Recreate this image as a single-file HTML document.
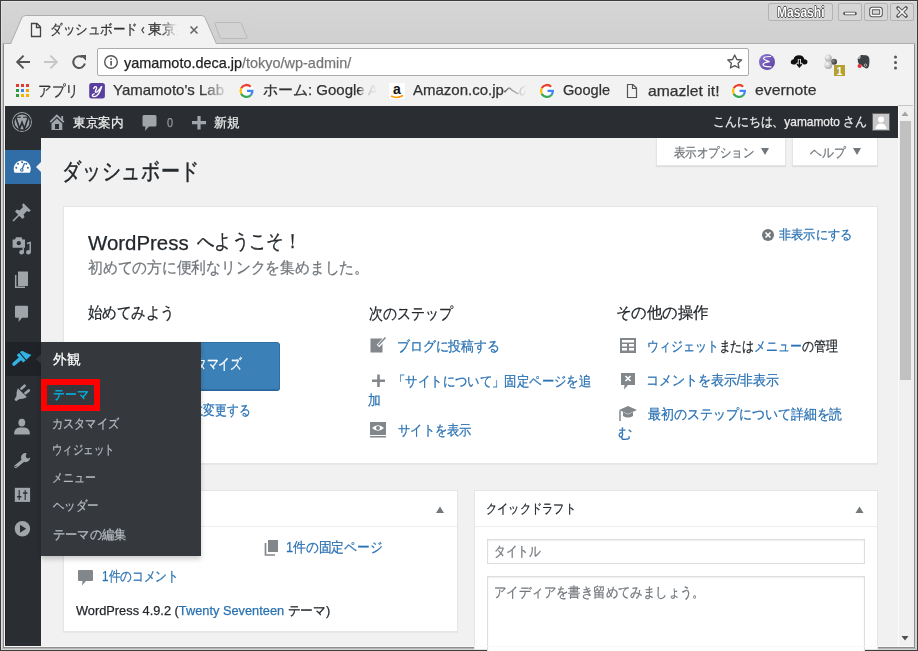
<!DOCTYPE html>
<html lang="ja">
<head>
<meta charset="utf-8">
<style>
*{box-sizing:border-box}
html,body{margin:0;padding:0;width:918px;height:651px;overflow:hidden;background:#3c3c3c}
body{font-family:"Liberation Sans",sans-serif;position:relative}
.a{position:absolute}
.t{position:absolute;white-space:nowrap;line-height:1;transform-origin:0 0;-webkit-text-stroke:.25px currentColor}
svg{position:absolute;overflow:visible}
</style>
</head>
<body>
<!-- window frame light edges -->
<div class="a" style="left:1px;top:1px;width:916px;height:649px;background:#d4d4d4"></div>
<div class="a" style="left:1px;top:1px;width:916px;height:1px;background:#e3e3e3"></div>
<div class="a" style="left:1px;top:1px;width:1px;height:649px;background:#e0e0e0"></div>
<!-- tab strip -->
<div class="a" style="left:2px;top:2px;width:913px;height:41px;background:linear-gradient(#d5d5d5,#d0d0d0)"></div>
<div class="a" style="left:2px;top:43px;width:913px;height:1px;background:#b0b0b0"></div>
<!-- content border -->
<div class="a" style="left:3px;top:44px;width:912px;height:604px;background:#8e8e8e"></div>
<div class="a" style="left:2px;top:44px;width:1px;height:605px;background:#c8c8c8"></div>
<div class="a" style="left:2px;top:648px;width:914px;height:1px;background:#b5b5b5"></div>
<!-- toolbar + bookmarks -->
<div class="a" style="left:4px;top:44px;width:910px;height:62px;background:#f2f2f2"></div>
<div class="a" style="left:4px;top:106px;width:910px;height:541px;background:#f4f4f4"></div>
<!-- TAB -->
<svg width="918" height="60" style="left:0;top:0">
  <path d="M10.5 44 L21.8 17.8 Q23 15.5 25.5 15.5 L201.5 15.5 Q204 15.5 205.2 17.8 L216.5 44" fill="#f2f2f2" stroke="#adadad" stroke-width="1"/>
  <rect x="4" y="44" width="910" height="10" fill="#f2f2f2"/>
  <path d="M215.5 22.5 L240 22.5 Q241 22.5 241.5 23.5 L247 37.5 Q247.3 38.5 246 38.5 L221.5 38.5 Q220.5 38.5 220 37.5 L214.8 23.5 Q214.5 22.5 215.5 22.5 Z" fill="#d3d3d3" stroke="#bababa" stroke-width="1"/>
  <!-- file icon -->
  <path d="M31.5 23.5 L37 23.5 L40.5 27 L40.5 36.5 L31.5 36.5 Z M36.5 23.5 L36.5 27.5 L40.5 27.5" fill="none" stroke="#444" stroke-width="1.3"/>
  <!-- close x -->
  <path d="M190.5 26.5 L197.5 33.5 M197.5 26.5 L190.5 33.5" stroke="#666" stroke-width="1.6"/>
  <!-- profile / window buttons -->
  <rect x="768.5" y="3.5" width="64" height="17" rx="1.5" fill="#d6d6d6" stroke="#b3b3b3"/>
  <rect x="838.5" y="3.5" width="23" height="17" rx="1.5" fill="#d6d6d6" stroke="#b3b3b3"/>
  <rect x="864.5" y="3.5" width="23" height="17" rx="1.5" fill="#d6d6d6" stroke="#b3b3b3"/>
  <rect x="890.5" y="3.5" width="23" height="17" rx="1.5" fill="#d6d6d6" stroke="#b3b3b3"/>
  <path d="M845 13.5 L855 13.5" stroke="#555" stroke-width="3.6" stroke-linecap="round"/>
  <path d="M845 13.5 L855 13.5" stroke="#fff" stroke-width="1.8"/>
  <rect x="871" y="8.5" width="10" height="7" rx="1.5" fill="none" stroke="#555" stroke-width="3.6"/>
  <rect x="871" y="8.5" width="10" height="7" rx="1.5" fill="none" stroke="#fff" stroke-width="1.6"/>
  <path d="M898 8 L906 16 M906 8 L898 16" stroke="#555" stroke-width="3.6" stroke-linecap="round"/>
  <path d="M898 8 L906 16 M906 8 L898 16" stroke="#fff" stroke-width="1.7"/>
</svg>
<div class="t" style="left:49.6px;top:22.0px;font-size:14px;color:#333;transform:scaleX(0.895)">ダッシュボード</div>
<div class="t" style="left:140.7px;top:21.5px;font-size:14px;color:#333;transform:scaleX(0.775)">‹</div>
<div class="t" style="left:148px;top:22px;font-size:14px;color:#333;width:34px;padding-bottom:4px;overflow:hidden;-webkit-mask-image:linear-gradient(90deg,#000 12px,transparent 30px);transform:scaleX(1)">東京案内</div>
<div class="t" style="left:777px;top:4.5px;font-size:14px;font-weight:bold;color:#fff;-webkit-text-stroke:0;text-shadow:.8px 0 0 #4a4a4a,-.8px 0 0 #4a4a4a,0 .8px 0 #4a4a4a,0 -.8px 0 #4a4a4a;transform:scaleX(0.86)">Masashi</div>

<!-- OMNIBOX -->
<div class="a" style="left:97px;top:48px;width:652px;height:28px;background:#fff;border:1px solid #ababab;border-radius:2px"></div>
<svg width="918" height="110" style="left:0;top:0">
  <!-- back -->
  <path d="M30 62 L17.5 62 M23.6 55.6 L17.2 62 L23.6 68.4" fill="none" stroke="#555" stroke-width="2"/>
  <path d="M44 62 L56.5 62 M50.4 55.6 L56.8 62 L50.4 68.4" fill="none" stroke="#c6c6c6" stroke-width="2"/>
  <!-- reload -->
  <path d="M84.9 63.6 A5.9 5.9 0 1 1 82.6 57.3" fill="none" stroke="#555" stroke-width="2"/>
  <path d="M80.2 55 L86 55 L86 60.8 Z" fill="#555"/>
  <!-- info -->
  <circle cx="111" cy="62" r="6.3" fill="none" stroke="#555" stroke-width="1.4"/>
  <rect x="110.3" y="61" width="1.6" height="4.5" fill="#555"/>
  <rect x="110.3" y="58.3" width="1.6" height="1.6" fill="#555"/>
  <!-- star -->
  <path d="M734.7 55 L736.8 59.5 L741.6 60 L738 63.2 L739 68 L734.7 65.6 L730.4 68 L731.4 63.2 L727.8 60 L732.6 59.5 Z" fill="none" stroke="#555" stroke-width="1.3" stroke-linejoin="round"/>
  <!-- emacs -->
  <defs>
    <linearGradient id="emg" x1="0" y1="0" x2="1" y2="1"><stop offset="0" stop-color="#8c74d0"/><stop offset="1" stop-color="#5a3f9e"/></linearGradient>
    <radialGradient id="b1" cx=".35" cy=".35" r=".7"><stop offset="0" stop-color="#fafafa"/><stop offset="1" stop-color="#a8a8a8"/></radialGradient>
    <radialGradient id="b2" cx=".35" cy=".35" r=".7"><stop offset="0" stop-color="#888"/><stop offset="1" stop-color="#333"/></radialGradient>
  </defs>
  <circle cx="767" cy="62" r="8" fill="url(#emg)"/>
  <path d="M771 56.5 Q763.5 56.5 763.5 58.3 Q763.5 60 769.5 61.6 Q763 62.5 763 64.6 Q763.3 67 771.5 66.8" fill="none" stroke="#fff" stroke-width="1.2"/>
  <!-- cloud -->
  <path d="M793.5 64.5 Q790.5 64.5 790.8 61.8 Q791 59.5 793.6 59.3 Q794.3 55.3 799 55.3 Q803.5 55.5 804.3 59.3 Q807.5 59.5 807.5 62 Q807.3 64.5 804.5 64.5 Z" fill="#111"/>
  <path d="M799.4 59 L799.4 66 M796.3 63.5 L799.4 67 L802.5 63.5" fill="none" stroke="#f2f2f2" stroke-width="3.2"/>
  <path d="M799.4 59.5 L799.4 66 M797 64 L799.4 66.8 L801.8 64" fill="none" stroke="#111" stroke-width="1.5"/>
  <!-- balls -->
  <circle cx="834" cy="61.8" r="3" fill="url(#b2)"/>
  <circle cx="828.3" cy="65" r="3.9" fill="url(#b1)"/>
  <circle cx="828.3" cy="57.9" r="3.5" fill="url(#b1)"/>
  <rect x="834" y="65" width="11" height="11" fill="#b5a032"/>
  <text x="839.5" y="74.5" font-size="10" fill="#fff" text-anchor="middle" font-family="Liberation Sans" font-weight="bold">1</text>
  <!-- evernote -->
  <path d="M859.5 56.5 L861 55 L866 55.2 Q869.5 56 869.4 60 Q869.5 66 868 68 Q866 69 864.5 67.5 Q862.5 67 861.5 65 L859 64 Q857.5 62 857.6 58.6 Z" fill="#3d4144"/>
  <path d="M857.6 58.2 L860 58.2 L860 56" fill="none" stroke="#f2f2f2" stroke-width=".8"/>
  <circle cx="865.5" cy="65.2" r="1.2" fill="none" stroke="#f2f2f2" stroke-width=".6"/>
  <circle cx="859.6" cy="66" r="2.1" fill="#e8303c"/>
  <!-- dots -->
  <circle cx="895.5" cy="57" r="1.5" fill="#555"/>
  <circle cx="895.5" cy="62.5" r="1.5" fill="#555"/>
  <circle cx="895.5" cy="68" r="1.5" fill="#555"/>
  <!-- bookmarks -->
  <g fill="#e33b2e"><rect x="16" y="84" width="3" height="3"/><rect x="21" y="84" width="3" height="3"/><rect x="26" y="84" width="3" height="3"/></g>
  <g><rect x="16" y="89" width="3" height="3" fill="#2e9a44"/><rect x="21" y="89" width="3" height="3" fill="#4285f4"/><rect x="26" y="89" width="3" height="3" fill="#f4a400"/></g>
  <g><rect x="16" y="94" width="3" height="3" fill="#2e9a44"/><rect x="21" y="94" width="3" height="3" fill="#f4b400"/><rect x="26" y="94" width="3" height="3" fill="#f4b400"/></g>
  <rect x="89.2" y="83" width="15.7" height="15.6" rx="2.5" fill="#5a3fa0"/>
  <path d="M93.6 88.6 Q94.8 86 96.3 86.9 Q97.2 87.8 95.6 90.6 Q94.6 92.6 96.6 92.2 Q98.6 91.2 101.8 86.2 Q99.5 93.5 96.8 95.6 Q94 97.3 92.5 96 Q91.8 94.6 94.2 93.8" fill="none" stroke="#fff" stroke-width="1.3" stroke-linecap="round"/>
</svg>
<div class="t" style="left:123.8px;top:54.7px;font-size:15px;color:#222;transform:scaleX(0.963)">yamamoto.deca.jp<span style="color:#777">/tokyo/wp-admin/</span></div>
<div class="t" style="left:38.1px;top:82.5px;font-size:15px;color:#333;transform:scaleX(0.903)">アプリ</div>
<div class="t" style="left:113px;top:82px;font-size:15px;color:#333;width:112px;padding-bottom:4px;overflow:hidden;-webkit-mask-image:linear-gradient(90deg,#000 88px,rgba(0,0,0,.15) 112px);transform:scaleX(1)">Yamamoto's Lab</div>
<div class="t" style="left:263px;top:82px;font-size:15px;color:#333;width:114px;padding-bottom:4px;overflow:hidden;-webkit-mask-image:linear-gradient(90deg,#000 96px,rgba(0,0,0,.35) 100px,transparent 114px);transform:scaleX(1)">ホーム: Google Ad</div>
<div class="t" style="left:413px;top:82px;font-size:15px;color:#333;width:114px;padding-bottom:4px;overflow:hidden;-webkit-mask-image:linear-gradient(90deg,#000 89px,rgba(0,0,0,.55) 97px,transparent 114px);transform:scaleX(1)">Amazon.co.jpへの</div>
<div class="t" style="left:563.4px;top:81.5px;font-size:15px;color:#333;transform:scaleX(0.973)">Google</div>
<div class="t" style="left:647.9px;top:82.5px;font-size:15px;color:#333;transform:scaleX(1.046)">amazlet it!</div>
<div class="t" style="left:754.9px;top:82.0px;font-size:15px;color:#333;transform:scaleX(1.053)">evernote</div>


<!-- bookmark icons -->
<svg width="918" height="110" style="left:0;top:0">
  <g transform="translate(246.5,91)"><circle r="7.5" fill="#fff"/>
    <path d="M4.2 -4.3 A6 6 0 0 0 -5.3 -2.8" fill="none" stroke="#ea4335" stroke-width="2.3"/>
    <path d="M-5.3 -2.8 A6 6 0 0 0 -5.3 2.8" fill="none" stroke="#fbbc05" stroke-width="2.3"/>
    <path d="M-5.3 2.8 A6 6 0 0 0 4.5 3.9" fill="none" stroke="#34a853" stroke-width="2.3"/>
    <path d="M4.5 3.9 A6 6 0 0 0 5.9 -0.2 L0.5 -0.2" fill="none" stroke="#4285f4" stroke-width="2.3"/></g>
  <g transform="translate(547,91)"><circle r="7.5" fill="#fff"/>
    <path d="M4.2 -4.3 A6 6 0 0 0 -5.3 -2.8" fill="none" stroke="#ea4335" stroke-width="2.3"/>
    <path d="M-5.3 -2.8 A6 6 0 0 0 -5.3 2.8" fill="none" stroke="#fbbc05" stroke-width="2.3"/>
    <path d="M-5.3 2.8 A6 6 0 0 0 4.5 3.9" fill="none" stroke="#34a853" stroke-width="2.3"/>
    <path d="M4.5 3.9 A6 6 0 0 0 5.9 -0.2 L0.5 -0.2" fill="none" stroke="#4285f4" stroke-width="2.3"/></g>
  <g transform="translate(739,91)"><circle r="7.5" fill="#fff"/>
    <path d="M4.2 -4.3 A6 6 0 0 0 -5.3 -2.8" fill="none" stroke="#ea4335" stroke-width="2.3"/>
    <path d="M-5.3 -2.8 A6 6 0 0 0 -5.3 2.8" fill="none" stroke="#fbbc05" stroke-width="2.3"/>
    <path d="M-5.3 2.8 A6 6 0 0 0 4.5 3.9" fill="none" stroke="#34a853" stroke-width="2.3"/>
    <path d="M4.5 3.9 A6 6 0 0 0 5.9 -0.2 L0.5 -0.2" fill="none" stroke="#4285f4" stroke-width="2.3"/></g>
  <rect x="389" y="83" width="16" height="16" fill="#fff"/>
  <text x="397" y="93.5" font-size="14" fill="#111" text-anchor="middle" font-family="Liberation Sans" font-weight="bold">a</text>
  <path d="M391 96 Q397 99 403 95.5" fill="none" stroke="#f90" stroke-width="1.5"/>
  <path d="M627.5 84.5 L633 84.5 L636.5 88 L636.5 97.5 L627.5 97.5 Z M632.5 84.5 L632.5 88.5 L636.5 88.5" fill="none" stroke="#555" stroke-width="1.2"/>
</svg>

<!-- WP ADMIN BAR -->
<div class="a" style="left:5px;top:106px;width:893px;height:32px;background:#2a2d32"></div>
<!-- scrollbar -->
<div class="a" style="left:898px;top:106px;width:16px;height:540px;background:#f0f0f0;border-left:1px solid #fbfbfb"></div>
<div class="a" style="left:900px;top:121px;width:10.5px;height:259px;background:#c1c1c1"></div>
<div class="a" style="left:898px;top:105px;width:15px;height:1px;background:#c6c6c6"></div>
<!-- content bg -->
<div class="a" style="left:41px;top:138px;width:857px;height:508px;background:#f1f1f1"></div>
<!-- sidebar -->
<div class="a" style="left:5px;top:138px;width:36px;height:508px;background:#2a2d32;border-left:1px solid #202428"></div>
<div class="a" style="left:5px;top:150px;width:36px;height:34px;background:#316ea7"></div>
<div class="a" style="left:5px;top:342px;width:36px;height:34px;background:#1f2328"></div>


<!-- ADMIN BAR CONTENT -->
<svg width="918" height="651" style="left:0;top:0">
  <!-- WP logo -->
  <circle cx="22" cy="122" r="9.4" fill="none" stroke="#a0a5aa" stroke-width="1.1"/>
  <circle cx="22" cy="122" r="7.6" fill="#a0a5aa"/>
  <path d="M15.8 117.6 L19.6 128.8 L22 122.5 L24.4 128.8 L28.2 117.6" fill="none" stroke="#2a2d32" stroke-width="1.7" stroke-linejoin="miter"/>
  <path d="M15 117.3 L21 117.3 M23 117.3 L29 117.3" stroke="#2a2d32" stroke-width="1.1"/>
  <circle cx="22" cy="122" r="8.4" fill="none" stroke="#2a2d32" stroke-width="1"/>
  <!-- home -->
  <path d="M50.2 122.2 L56.8 115.6 L63.8 122.2" fill="none" stroke="#a0a5aa" stroke-width="1.8"/>
  <path d="M62.2 116 L62.2 120" stroke="#a0a5aa" stroke-width="1.8"/>
  <path d="M51.5 123.5 L56.8 118.4 L62.3 123.5 L62.3 130 L51.5 130 Z" fill="#a0a5aa"/>
  <rect x="55" y="124" width="4" height="5" fill="#2a2d32"/>
  <!-- comment -->
  <path d="M144 115 L155 115 Q156.5 115 156.5 116.5 L156.5 125 Q156.5 126.5 155 126.5 L149 126.5 L145 131 L145.5 126.5 L144 126.5 Q142.5 126.5 142.5 125 L142.5 116.5 Q142.5 115 144 115 Z" fill="#a0a5aa"/>
  <!-- plus -->
  <path d="M192 122.7 L206 122.7 M199 116 L199 129.5" stroke="#a0a5aa" stroke-width="3.2"/>
  <!-- avatar -->
  <rect x="872" y="113" width="18" height="18" fill="#fff" opacity=".25"/>
  <rect x="873" y="114" width="16" height="16" fill="#c7c7c7"/>
  <circle cx="881" cy="119.5" r="3" fill="#fff"/>
  <path d="M875.5 129 Q876 123.5 881 123.5 Q886 123.5 886.5 129 Z" fill="#fff"/>
</svg>
<div class="t" style="left:73.3px;top:115.5px;font-size:13px;color:#eee;transform:scaleX(0.974)">東京案内</div>
<div class="t" style="left:166.6px;top:116.0px;font-size:13px;color:#999;transform:scaleX(0.838)">0</div>
<div class="t" style="left:214.3px;top:115.5px;font-size:13px;color:#eee;transform:scaleX(0.984)">新規</div>
<div class="t" style="left:713.2px;top:114.5px;font-size:13px;color:#eee;transform:scaleX(0.915)">こんにちは、yamamoto さん</div>

<!-- SIDEBAR ICONS -->
<svg width="918" height="651" style="left:0;top:0">
  <!-- dashboard gauge -->
  <path d="M14.6 172.7 A8.5 8.5 0 1 1 29.8 172.7 Z" fill="#fff"/>
  <path d="M24.6 163 L21.8 170" stroke="#316ea7" stroke-width="1.3"/>
  <circle cx="21.8" cy="170" r="1.8" fill="#316ea7"/>
  <circle cx="21.8" cy="170" r=".7" fill="#fff"/>
  <circle cx="18" cy="163.8" r="1" fill="#316ea7"/><circle cx="22.1" cy="162.2" r="1" fill="#316ea7"/><circle cx="26.3" cy="163.8" r="1" fill="#316ea7"/>
  <circle cx="16.3" cy="167.8" r="1" fill="#316ea7"/><circle cx="27.9" cy="167.8" r="1" fill="#316ea7"/>
  <path d="M36 167 L41 162 L41 172 Z" fill="#f1f1f1"/>
  <!-- pin -->
  <g transform="translate(22,212)">
    <path d="M1.5 -8.8 L8.8 -1.5 L7 0 L5 -1 L1.5 2.5 L2.5 5 L0.5 7 L-7 -0.5 L-5 -2.5 L-2.5 -1.5 L1 -5 L0 -7 Z" fill="#a0a5aa"/>
    <path d="M-2.5 2.5 L-9 9" stroke="#a0a5aa" stroke-width="1.6"/>
  </g>
  <!-- media -->
  <path d="M12.6 239.5 L15 239.5 L16 237.2 L21.5 237.2 L22.5 239.5 L25 239.5 L25 247.7 L12.6 247.7 Z" fill="#a0a5aa"/>
  <circle cx="18.8" cy="243.2" r="2.1" fill="#2a2d32"/>
  <path d="M27 243.5 L30.2 242.6 L30.2 252.5" fill="none" stroke="#a0a5aa" stroke-width="1.5"/>
  <circle cx="28.4" cy="252.3" r="2.3" fill="#a0a5aa"/><circle cx="21.6" cy="252.3" r="2.3" fill="#a0a5aa"/>
  <path d="M23.2 252.3 L23.2 247.5" stroke="#a0a5aa" stroke-width="1.4"/>
  <!-- pages -->
  <rect x="18" y="271.5" width="10" height="14.5" fill="#a0a5aa"/>
  <path d="M15.7 275 L15.7 287.3 L25 287.3" fill="none" stroke="#a0a5aa" stroke-width="1.5"/>
  <!-- comments -->
  <path d="M16 305.7 L27 305.7 Q28 305.7 28 306.7 L28 316.7 Q28 317.7 27 317.7 L22 317.7 L18.5 322 L18.8 317.7 L16 317.7 Q15 317.7 15 316.7 L15 306.7 Q15 305.7 16 305.7 Z" fill="#a0a5aa"/>
  <!-- appearance brush -->
  <path d="M20 352.2 Q21.2 350.7 23.2 351.2 Q27 353.6 31.4 355.1 L26.3 359.8 Z" fill="#33b2e4"/>
  <path d="M19.2 352.9 L25.6 360.4 L23.1 362.6 L16.7 355.1 Z" fill="#33b2e4"/>
  <path d="M19.9 358.8 L14 364" stroke="#33b2e4" stroke-width="3.6" stroke-linecap="round"/>
  <path d="M36 359 L41 354 L41 364 Z" fill="#35383d"/>
  <!-- plugins -->
  <path d="M17.8 388.2 L26.9 397.1 Q23.5 399.4 19.5 399 L16 401.2 L14.4 399.6 L16.4 396.3 Q16.2 391.8 17.8 388.2 Z" fill="#a0a5aa"/>
  <path d="M21.4 388.6 L24.6 385.7 M25.4 393.2 L28.8 390.4" stroke="#a0a5aa" stroke-width="2.6" stroke-linecap="round"/>
  <!-- users -->
  <ellipse cx="21.8" cy="422.6" rx="3.4" ry="3.9" fill="#a0a5aa"/>
  <path d="M14.2 434.5 L14.2 433 Q14.5 428 19.5 427.5 L24.5 427.5 Q29.5 428 29.8 433 L29.8 434.5 Z" fill="#a0a5aa"/>
  <!-- tools wrench -->
  <path d="M23.2 460.6 L15.8 466.6" stroke="#a0a5aa" stroke-width="3.2" stroke-linecap="round"/>
  <circle cx="15.9" cy="466.5" r=".7" fill="#2a2d32"/>
  <path d="M26.2 453 A4.6 4.6 0 1 0 30.2 457.5 L28.4 458.6 L26.6 458 L25.6 456 L26.4 454.2 Z" fill="#a0a5aa"/>
  <!-- settings -->
  <rect x="14.8" y="487.8" width="15.3" height="14.1" fill="#a0a5aa"/>
  <path d="M19.2 490 L19.2 500 M25.2 490 L25.2 500" stroke="#2a2d32" stroke-width="1.1"/>
  <path d="M17 496.8 L21.4 496.8 M23 493 L27.4 493" stroke="#2a2d32" stroke-width="1.6"/>
  <!-- play -->
  <circle cx="22.4" cy="528.8" r="7.7" fill="#a0a5aa"/>
  <path d="M20 524.8 L26.2 528.8 L20 532.8 Z" fill="#2a2d32"/>
</svg>


<!-- HEADER -->
<div class="t" style="left:62.1px;top:159.8px;font-size:23px;color:#23282d;-webkit-text-stroke:.45px #23282d;transform:scaleX(0.825)">ダッシュボード</div>
<div class="a" style="left:656px;top:138px;width:130px;height:28px;background:#fff;box-shadow:0 1px 1px rgba(0,0,0,.08);border:1px solid #e5e5e5;border-top:0"></div>
<div class="a" style="left:792px;top:138px;width:86px;height:28px;background:#fff;box-shadow:0 1px 1px rgba(0,0,0,.08);border:1px solid #e5e5e5;border-top:0"></div>
<div class="t" style="left:673.7px;top:145.5px;font-size:13px;color:#72777c;transform:scaleX(0.884)">表示オプション</div>
<div class="t" style="left:809.6px;top:145.5px;font-size:13px;color:#72777c;transform:scaleX(0.908)">ヘルプ</div>
<svg width="918" height="651" style="left:0;top:0">
  <path d="M761 148 L769 148 L765 155 Z" fill="#72777c"/>
  <path d="M853 148 L861 148 L857 155 Z" fill="#72777c"/>
</svg>

<!-- WELCOME PANEL -->
<div class="a" style="left:63px;top:206px;width:815px;height:258px;background:#fff;border:1px solid #e5e5e5;box-shadow:0 1px 1px rgba(0,0,0,.04)"></div>
<svg width="918" height="651" style="left:0;top:0">
  <circle cx="768" cy="235" r="6" fill="#72777c"/>
  <path d="M765.5 232.5 L770.5 237.5 M770.5 232.5 L765.5 237.5" stroke="#fff" stroke-width="1.6"/>
</svg>
<div class="t" style="left:779.4px;top:228.0px;font-size:13px;color:#2a72b3;transform:scaleX(0.938)">非表示にする</div>
<div class="t" style="left:88.0px;top:232.7px;font-size:20px;color:#23282d;transform:scaleX(1.021)">WordPress</div>
<div class="t" style="left:196.5px;top:231.0px;font-size:20px;color:#23282d;transform:scaleX(0.868)">へようこそ！</div>
<div class="t" style="left:88.1px;top:260.0px;font-size:16px;color:#72777c;transform:scaleX(0.924)">初めての方に便利なリンクを集めました。</div>
<div class="t" style="left:88.0px;top:304.5px;font-size:16px;color:#23282d;transform:scaleX(0.906)">始めてみよう</div>
<div class="t" style="left:369.1px;top:305.6px;font-size:16px;color:#23282d;transform:scaleX(0.870)">次のステップ</div>
<div class="t" style="left:616.3px;top:305.1px;font-size:16px;color:#23282d;transform:scaleX(0.965)">その他の操作</div>
<div class="a" style="left:88px;top:342px;width:192px;height:48px;background:#3b80b6;border:1px solid #2f6fa3;border-radius:3px;box-shadow:0 1px 0 #2a64a0"></div>
<div class="t" style="left:124.0px;top:355.5px;font-size:15px;color:#fff;transform:scaleX(0.787)">サイトをカスタマイズ</div>
<div class="t" style="left:86.3px;top:402.5px;font-size:14px;color:#23282d;transform:scaleX(0.839)">または、<span style="color:#2a72b3">別のテーマに変更する</span></div>

<svg width="918" height="651" style="left:0;top:0">
  <!-- edit -->
  <rect x="370.5" y="338.5" width="12" height="14" fill="#82878c"/>
  <path d="M378 346 L386 337.5" stroke="#fff" stroke-width="3.5"/>
  <path d="M378.5 345 L385.5 337.5" stroke="#82878c" stroke-width="1.6"/>
  <!-- plus -->
  <path d="M372 380.8 L385 380.8 M378.5 374.5 L378.5 387" stroke="#82878c" stroke-width="2.6"/>
  <!-- view -->
  <rect x="370" y="422" width="16" height="13" fill="#82878c"/>
  <path d="M372 428 Q378 422.5 384 428 Q378 433.5 372 428 Z" fill="#fff"/>
  <circle cx="378" cy="428" r="2" fill="#82878c"/>
  <rect x="370" y="436" width="16" height="1.5" fill="#82878c"/>
  <!-- widgets -->
  <rect x="620" y="338" width="16" height="15" fill="#82878c"/>
  <rect x="622" y="340" width="12" height="2.5" fill="#fff"/>
  <rect x="622" y="344" width="5" height="2.5" fill="#fff"/><rect x="629" y="344" width="5" height="2.5" fill="#fff"/>
  <rect x="622" y="348" width="5" height="2.5" fill="#fff"/><rect x="629" y="348" width="5" height="2.5" fill="#fff"/>
  <!-- comments x -->
  <path d="M621 373 L635 373 L635 385 L628 385 L624 389.5 L624.5 385 L621 385 Z" fill="#82878c"/>
  <path d="M625.5 376 L630.5 381 M630.5 376 L625.5 381" stroke="#fff" stroke-width="1.6"/>
  <!-- learn more cap -->
  <path d="M619 410 L628 406 L637 410 L628 414 Z" fill="#82878c"/>
  <path d="M623 412 L623 416 Q628 419 633 416 L633 412 L628 414.5 Z" fill="#82878c"/>
  <path d="M620 410.5 L620 421" stroke="#82878c" stroke-width="1.5"/>
</svg>
<div class="t" style="left:396.8px;top:338.5px;font-size:14px;color:#2a72b3;transform:scaleX(0.918)">ブログに投稿する</div>
<div class="t" style="left:393.1px;top:373.5px;font-size:14px;color:#2a72b3;transform:scaleX(0.884)">「サイトについて」固定ページを追</div>
<div class="t" style="left:368.3px;top:392.5px;font-size:14px;color:#2a72b3;transform:scaleX(0.913)">加</div>
<div class="t" style="left:398.1px;top:422.5px;font-size:14px;color:#2a72b3;transform:scaleX(0.878)">サイトを表示</div>
<div class="t" style="left:647.3px;top:339.2px;font-size:14px;color:#2a72b3;transform:scaleX(0.852)">ウィジェット<span style="color:#23282d">または</span>メニュー<span style="color:#23282d">の管理</span></div>
<div class="t" style="left:646.1px;top:372.5px;font-size:14px;color:#2a72b3;transform:scaleX(0.926)">コメントを表示/非表示</div>
<div class="t" style="left:648.1px;top:407.1px;font-size:14px;color:#2a72b3;transform:scaleX(0.926)">最初のステップについて詳細を読</div>
<div class="t" style="left:617.9px;top:426.2px;font-size:14px;color:#2a72b3;transform:scaleX(1.016)">む</div>

<!-- POSTBOX LEFT -->
<div class="a" style="left:63px;top:490px;width:395px;height:142px;background:#fff;border:1px solid #e5e5e5;box-shadow:0 1px 1px rgba(0,0,0,.04)"></div>
<div class="a" style="left:64px;top:526px;width:393px;height:1px;background:#eee"></div>
<svg width="918" height="651" style="left:0;top:0">
  <path d="M436 513 L444 513 L440 506.6 Z" fill="#72777c"/>
  <!-- pages icon -->
  <rect x="268" y="540" width="10" height="12" fill="#82878c"/>
  <path d="M265.5 543 L265.5 555 L275 555" fill="none" stroke="#82878c" stroke-width="1.7"/>
  <!-- comment icon -->
  <path d="M79 570 L92 570 Q93 570 93 571 L93 580 Q93 581 92 581 L86 581 L82 585.5 L82.5 581 L79 581 Q78 581 78 580 L78 571 Q78 570 79 570 Z" fill="#82878c"/>
</svg>
<div class="t" style="left:286.2px;top:539.5px;font-size:14px;color:#2a72b3;transform:scaleX(0.910)">1件の固定ページ</div>
<div class="t" style="left:101.8px;top:568.5px;font-size:14px;color:#2a72b3;transform:scaleX(0.835)">1件のコメント</div>
<div class="t" style="left:76.0px;top:603.5px;font-size:13px;color:#23282d;transform:scaleX(0.984)">WordPress 4.9.2 (<span style="color:#2a72b3">Twenty Seventeen</span> テーマ)</div>

<!-- POSTBOX RIGHT -->
<div class="a" style="left:474px;top:490px;width:404px;height:160px;background:#fff;border:1px solid #e5e5e5"></div>
<div class="a" style="left:475px;top:526px;width:402px;height:1px;background:#eee"></div>
<div class="t" style="left:485.9px;top:501.6px;font-size:13px;color:#23282d;transform:scaleX(0.865)">クイックドラフト</div>
<div class="a" style="left:487px;top:539px;width:378px;height:25px;background:#fff;border:1px solid #ddd;box-shadow:inset 0 1px 2px rgba(0,0,0,.07)"></div>
<div class="t" style="left:494.3px;top:544.2px;font-size:14px;color:#72777c;transform:scaleX(0.836)">タイトル</div>
<div class="a" style="left:487px;top:576px;width:378px;height:80px;background:#fff;border:1px solid #ddd;box-shadow:inset 0 1px 2px rgba(0,0,0,.07)"></div>
<div class="t" style="left:494.2px;top:584.8px;font-size:14px;color:#72777c;transform:scaleX(0.886)">アイディアを書き留めてみましょう。</div>

<svg width="918" height="651" style="left:0;top:0">
  <path d="M855.5 513 L863.5 513 L859.5 506.6 Z" fill="#72777c"/>
  <path d="M901.5 116 L908.5 116 L905 111.5 Z" fill="#a3a3a3"/>
  <path d="M901.5 636 L908.5 636 L905 640.5 Z" fill="#505050"/>
</svg>
<!-- FLYOUT -->
<div class="a" style="left:41px;top:342px;width:160px;height:214px;background:#35383d;box-shadow:0 3px 5px rgba(0,0,0,.2)"></div>
<div class="t" style="left:53.0px;top:351.9px;font-size:14px;color:#fff;transform:scaleX(0.980)">外観</div>
<div class="a" style="left:41px;top:379px;width:59px;height:32px;border:6px solid #f00"></div>
<div class="t" style="left:53.1px;top:387.5px;font-size:13px;color:#00b9eb;transform:scaleX(0.920)">テーマ</div>
<div class="t" style="left:52.1px;top:416.9px;font-size:13px;color:#b4b9be;transform:scaleX(0.857)">カスタマイズ</div>
<div class="t" style="left:52.2px;top:443.0px;font-size:13px;color:#b4b9be;transform:scaleX(0.804)">ウィジェット</div>
<div class="t" style="left:52.2px;top:470.5px;font-size:13px;color:#b4b9be;transform:scaleX(0.839)">メニュー</div>
<div class="t" style="left:53.0px;top:498.9px;font-size:13px;color:#b4b9be;transform:scaleX(0.882)">ヘッダー</div>
<div class="t" style="left:53.0px;top:527.6px;font-size:13px;color:#b4b9be;transform:scaleX(0.942)">テーマの編集</div>

<div class="a" style="left:4px;top:646px;width:910px;height:1px;background:#f8f8f8"></div>
</body>
</html>
